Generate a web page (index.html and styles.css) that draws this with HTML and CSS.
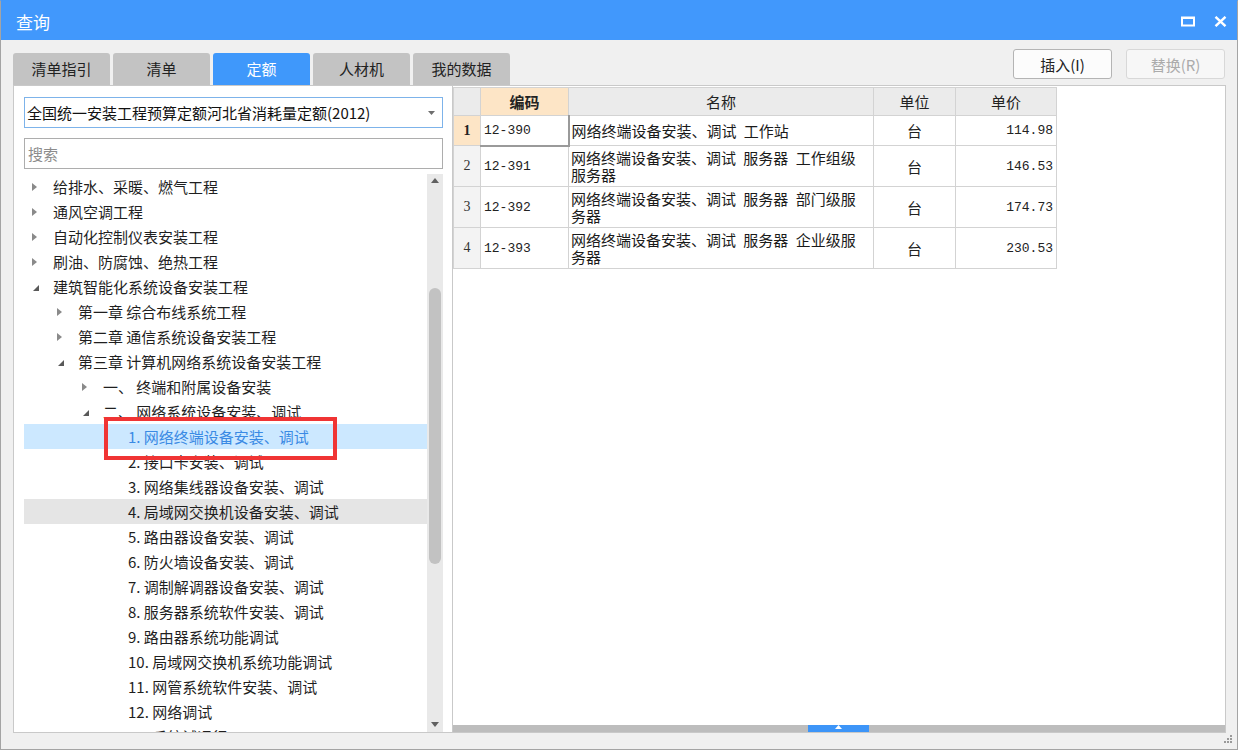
FILE: index.html
```html
<!DOCTYPE html>
<html lang="zh-CN">
<head>
<meta charset="utf-8">
<title>查询</title>
<link rel="stylesheet" href="styles.css">
</head>
<body>
<div class="window">
  <div class="titlebar">
    <span class="title">查询</span>
    <div class="win-ctrls">
      <svg class="ic-max" width="14" height="11" viewBox="0 0 14 11"><rect x="1" y="1.5" width="12" height="8" fill="none" stroke="#fff" stroke-width="2"/><rect x="1" y="1" width="12" height="2" fill="#fff"/></svg>
      <svg class="ic-close" width="13" height="11" viewBox="0 0 13 11"><path d="M1.5 0.8 L11.5 10.2 M11.5 0.8 L1.5 10.2" stroke="#fff" stroke-width="2.4" fill="none"/></svg>
    </div>
  </div>
  <div class="body">
    <div class="toolbar">
      <div class="tabs">
        <div class="tab">清单指引</div>
        <div class="tab">清单</div>
        <div class="tab active">定额</div>
        <div class="tab">人材机</div>
        <div class="tab">我的数据</div>
      </div>
      <div class="actions">
        <button class="btn">插入(I)</button>
        <button class="btn disabled">替换(R)</button>
      </div>
    </div>
    <div class="main">
      <div class="left">
        <div class="combo">
          <span class="combo-text">全国统一安装工程预算定额河北省消耗量定额(2012)</span>
          <svg width="7" height="4" viewBox="0 0 7 4"><path d="M0 0 L7 0 L3.5 4 Z" fill="#6e6e6e"/></svg>
        </div>
        <div class="search">搜索</div>
        <div class="tree">
          <div class="tree-list">
            <div class="row l0"><span class="tw"><svg class="col" width="5" height="8" viewBox="0 0 5 8"><path d="M0 0 L5 4 L0 8 Z"/></svg></span>给排水、采暖、燃气工程</div>
            <div class="row l0"><span class="tw"><svg class="col" width="5" height="8" viewBox="0 0 5 8"><path d="M0 0 L5 4 L0 8 Z"/></svg></span>通风空调工程</div>
            <div class="row l0"><span class="tw"><svg class="col" width="5" height="8" viewBox="0 0 5 8"><path d="M0 0 L5 4 L0 8 Z"/></svg></span>自动化控制仪表安装工程</div>
            <div class="row l0"><span class="tw"><svg class="col" width="5" height="8" viewBox="0 0 5 8"><path d="M0 0 L5 4 L0 8 Z"/></svg></span>刷油、防腐蚀、绝热工程</div>
            <div class="row l0"><span class="tw"><svg class="exp" width="6" height="6" viewBox="0 0 6 6"><path d="M6 0 L6 6 L0 6 Z"/></svg></span>建筑智能化系统设备安装工程</div>
            <div class="row l1"><span class="tw"><svg class="col" width="5" height="8" viewBox="0 0 5 8"><path d="M0 0 L5 4 L0 8 Z"/></svg></span>第一章 综合布线系统工程</div>
            <div class="row l1"><span class="tw"><svg class="col" width="5" height="8" viewBox="0 0 5 8"><path d="M0 0 L5 4 L0 8 Z"/></svg></span>第二章 通信系统设备安装工程</div>
            <div class="row l1"><span class="tw"><svg class="exp" width="6" height="6" viewBox="0 0 6 6"><path d="M6 0 L6 6 L0 6 Z"/></svg></span>第三章 计算机网络系统设备安装工程</div>
            <div class="row l2"><span class="tw"><svg class="col" width="5" height="8" viewBox="0 0 5 8"><path d="M0 0 L5 4 L0 8 Z"/></svg></span>一、 终端和附属设备安装</div>
            <div class="row l2"><span class="tw"><svg class="exp" width="6" height="6" viewBox="0 0 6 6"><path d="M6 0 L6 6 L0 6 Z"/></svg></span>二、 网络系统设备安装、调试</div>
            <div class="row l3 selected"><span class="tw"></span>1. 网络终端设备安装、调试</div>
            <div class="row l3"><span class="tw"></span>2. 接口卡安装、调试</div>
            <div class="row l3"><span class="tw"></span>3. 网络集线器设备安装、调试</div>
            <div class="row l3 hover"><span class="tw"></span>4. 局域网交换机设备安装、调试</div>
            <div class="row l3"><span class="tw"></span>5. 路由器设备安装、调试</div>
            <div class="row l3"><span class="tw"></span>6. 防火墙设备安装、调试</div>
            <div class="row l3"><span class="tw"></span>7. 调制解调器设备安装、调试</div>
            <div class="row l3"><span class="tw"></span>8. 服务器系统软件安装、调试</div>
            <div class="row l3"><span class="tw"></span>9. 路由器系统功能调试</div>
            <div class="row l3"><span class="tw"></span>10. 局域网交换机系统功能调试</div>
            <div class="row l3"><span class="tw"></span>11. 网管系统软件安装、调试</div>
            <div class="row l3"><span class="tw"></span>12. 网络调试</div>
            <div class="row l3"><span class="tw"></span>13. 系统试运行</div>
          </div>
          <div class="vscroll">
            <svg class="vs-up" width="8" height="5" viewBox="0 0 8 5"><path d="M0 5 L4 0 L8 5 Z" fill="#606060"/></svg>
            <div class="vs-thumb"></div>
            <svg class="vs-down" width="8" height="5" viewBox="0 0 8 5"><path d="M0 0 L8 0 L4 5 Z" fill="#606060"/></svg>
          </div>
        </div>
      </div>
      <div class="right">
        <div class="grid-wrap">
          <table class="grid">
            <colgroup>
              <col class="c-rh"><col class="c-code"><col class="c-name"><col class="c-unit"><col class="c-price">
            </colgroup>
            <thead>
              <tr class="hdr">
                <th class="rh"></th>
                <th class="sel-col">编码</th>
                <th>名称</th>
                <th>单位</th>
                <th>单价</th>
              </tr>
            </thead>
            <tbody>
              <tr class="r1">
                <td class="rh cur">1</td>
                <td class="code focus">12-390</td>
                <td class="name">网络终端设备安装、调试 工作站</td>
                <td class="unit">台</td>
                <td class="price">114.98</td>
              </tr>
              <tr class="r2">
                <td class="rh">2</td>
                <td class="code">12-391</td>
                <td class="name">网络终端设备安装、调试 服务器 工作组级 服务器</td>
                <td class="unit">台</td>
                <td class="price">146.53</td>
              </tr>
              <tr class="r2">
                <td class="rh">3</td>
                <td class="code">12-392</td>
                <td class="name">网络终端设备安装、调试 服务器 部门级服务器</td>
                <td class="unit">台</td>
                <td class="price">174.73</td>
              </tr>
              <tr class="r2">
                <td class="rh">4</td>
                <td class="code">12-393</td>
                <td class="name">网络终端设备安装、调试 服务器 企业级服务器</td>
                <td class="unit">台</td>
                <td class="price">230.53</td>
              </tr>
            </tbody>
          </table>
        </div>
        <div class="hscroll">
          <div class="hthumb"><svg width="7" height="4" viewBox="0 0 7 4"><path d="M0 4 L3.5 0 L7 4 Z" fill="#fff"/></svg></div>
        </div>
      </div>
    </div>
  </div>
  <svg class="grip" width="10" height="10" viewBox="0 0 10 10" fill="#9a9a9a">
    <rect x="7" y="0" width="2" height="2"/>
    <rect x="4" y="3" width="2" height="2"/><rect x="7" y="3" width="2" height="2"/>
    <rect x="1" y="6" width="2" height="2"/><rect x="4" y="6" width="2" height="2"/><rect x="7" y="6" width="2" height="2"/>
  </svg>
  <div class="mark"></div>
</div>
</body>
</html>
```

FILE: styles.css
```css
* { box-sizing: border-box; }
html, body { margin: 0; padding: 0; }
body {
  width: 1238px;
  height: 750px;
  overflow: hidden;
  background: #f0f0f0;
  font-family: "Noto Sans CJK SC", "Noto Sans", sans-serif;
  color: #1f1f1f;
}
.window {
  position: relative;
  width: 1238px;
  height: 750px;
  border: 1px solid #a4a4a4;
  border-top-color: #4198fc;
  background: #f0f0f0;
  display: flex;
  flex-direction: column;
}
.titlebar {
  height: 39px;
  flex: none;
  background: #4198fc;
  display: flex;
  align-items: center;
  justify-content: space-between;
  padding: 0 10px 0 15px;
}
.title {
  color: #fff;
  font-size: 17px;
  line-height: 20px;
  margin-top: 2px;
}
.win-ctrls {
  display: flex;
  align-items: center;
  gap: 19px;
  margin-top: 1px;
}
.body {
  flex: 1;
  display: flex;
  flex-direction: column;
  padding: 9px 11px 16px 12px;
  min-height: 0;
}
.toolbar {
  height: 36px;
  flex: none;
  display: flex;
  justify-content: space-between;
  align-items: flex-end;
}
.tabs {
  display: flex;
  gap: 3px;
  align-items: flex-end;
}
.tab {
  width: 97px;
  height: 32px;
  background: #c3c3c3;
  border-radius: 3px 3px 0 0;
  font-size: 15px;
  line-height: 32px;
  text-align: center;
  color: #222;
}
.tab.active {
  background: #3f98fb;
  color: #fff;
}
.actions {
  display: flex;
  gap: 14px;
  margin-bottom: 6px;
  margin-right: 1px;
}
.btn {
  width: 99px;
  height: 30px;
  background: #fcfcfc;
  border: 1px solid #b4b4b4;
  border-radius: 3px;
  font-family: "Noto Sans CJK SC", "Noto Sans", sans-serif;
  font-size: 15px;
  color: #222;
  padding: 0;
}
.btn.disabled {
  border-color: #d8d8d8;
  color: #ababab;
  background: #f7f7f7;
}
.main {
  flex: 1;
  display: flex;
  min-height: 0;
}
.left {
  width: 439px;
  flex: none;
  background: #fff;
  border: 1px solid #c9c9c9;
  border-right: none;
  display: flex;
  flex-direction: column;
  padding: 11px 9px 0 10px;
}
.combo {
  height: 31px;
  flex: none;
  border: 1px solid #7db3ea;
  display: flex;
  align-items: center;
  justify-content: space-between;
  padding: 0 7px 0 2px;
  font-size: 15px;
  color: #111;
}
.search {
  height: 31px;
  flex: none;
  margin-top: 10px;
  border: 1px solid #adadad;
  padding: 0 3px;
  font-size: 15px;
  line-height: 29px;
  color: #8c8c8c;
}
.tree {
  flex: 1;
  min-height: 0;
  margin-top: 5px;
  display: flex;
}
.tree-list {
  flex: 1;
  overflow: hidden;
}
.row {
  height: 25px;
  display: flex;
  align-items: center;
  font-size: 15px;
  color: #1f1f1f;
  white-space: nowrap;
}
.row.l1 { padding-left: 25px; }
.row.l2 { padding-left: 50px; }
.row.l3 { padding-left: 75px; }
.row.selected { background: #cce8ff; color: #3a8ae4; }
.row.hover { background: #e5e5e5; }
.tw {
  width: 29px;
  flex: none;
  display: flex;
  align-items: center;
}
.tw svg.col { margin-left: 8px; fill: #8a8a8a; }
.tw svg.exp { margin-left: 9px; margin-top: 2px; fill: #595959; }
.vscroll {
  width: 16px;
  flex: none;
  background: #e9e9e9;
  display: flex;
  flex-direction: column;
  align-items: center;
}
.vs-up { margin-top: 4px; flex: none; }
.vs-thumb {
  width: 12px;
  height: 276px;
  margin-top: 105px;
  background: #c2c2c2;
  border-radius: 6px;
  flex: none;
}
.vs-down { margin-top: auto; margin-bottom: 5px; flex: none; }
.right {
  flex: 1;
  background: #fff;
  border: 1px solid #c9c9c9;
  display: flex;
  flex-direction: column;
  min-width: 0;
}
.grid-wrap {
  flex: 1;
  padding-top: 1px;
}
.grid {
  border-collapse: collapse;
  table-layout: fixed;
  width: 603px;
}
.c-rh { width: 27px; }
.c-code { width: 88px; }
.c-name { width: 305px; }
.c-unit { width: 82px; }
.c-price { width: 101px; }
.grid th, .grid td {
  border: 1px solid #d3d3d3;
  padding: 0;
  font-weight: normal;
}
.grid th {
  height: 28px;
  background: #ebebeb;
  font-size: 15px;
  color: #222;
  text-align: center;
}
.grid th.sel-col {
  background: #fde5c6;
  font-weight: bold;
}
.grid tr.r1 td { height: 30px; }
.grid tr.r2 td { height: 41px; }
.grid td.rh {
  background: #f3f3f3;
  text-align: center;
  font-family: "Liberation Serif", serif;
  font-size: 14px;
  color: #333;
}
.grid td.rh.cur {
  background: #fde5c6;
  font-weight: bold;
  color: #222;
}
.grid td.code {
  font-family: "Liberation Mono", monospace;
  font-size: 13px;
  padding-left: 3px;
  color: #222;
}
.grid td.code.focus {
  border-left: 1px solid #3d8fea;
  border-right: 2px solid #9a9a9a;
  border-bottom: 2px solid #9a9a9a;
}
.grid td.name {
  font-size: 15px;
  line-height: 17px;
  padding-left: 2px;
  padding-right: 12px;
  color: #1a1a1a;
  word-break: break-all;
  word-spacing: 4px;
}
.grid td.unit {
  text-align: center;
  font-size: 15px;
  color: #222;
}
.grid td.price {
  text-align: right;
  padding-right: 3px;
  font-family: "Liberation Mono", monospace;
  font-size: 13px;
  color: #222;
}
.hscroll {
  height: 7px;
  flex: none;
  background: #bdbdbd;
  display: flex;
}
.hthumb {
  width: 61px;
  margin-left: 355px;
  background: #3d95f8;
  display: flex;
  justify-content: center;
  align-items: flex-start;
}
.grip {
  position: absolute;
  right: 4px;
  bottom: 4px;
}
.mark {
  position: absolute;
  left: 103px;
  top: 416px;
  width: 233px;
  height: 43px;
  border: 4px solid #f03434;
}
```
